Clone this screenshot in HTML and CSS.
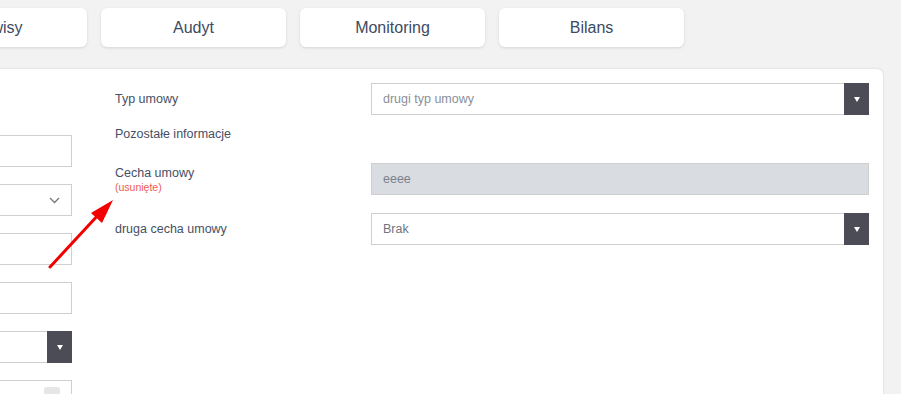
FILE: index.html
```html
<!DOCTYPE html>
<html lang="pl">
<head>
  <meta charset="UTF-8">
  <meta name="viewport" content="width=device-width, initial-scale=1.0">
  <title>Umowa - szczegóły</title>
  <link rel="stylesheet" href="styles.css">
</head>
<body>

  <div class="tabs">
    <div class="tab">Serwisy</div>
    <div class="tab">Audyt</div>
    <div class="tab">Monitoring</div>
    <div class="tab">Bilans</div>
  </div>

  <div class="panel">
    <!-- lewa kolumna formularza -->
    <div class="side">
      <div class="field"></div>
      <div class="field">
        <svg class="chevron" width="11" height="7" viewBox="0 0 11 7"><path d="M1 1 L5.5 5.5 L10 1" fill="none" stroke="#777" stroke-width="1.3"/></svg>
      </div>
      <div class="field"></div>
      <div class="field"></div>
      <div class="field">
        <span class="drop-btn"><i class="caret"></i></span>
      </div>
      <div class="field">
        <span class="spin"></span>
      </div>
    </div>

    <!-- dane umowy -->
    <div class="form">
      <div class="row">
        <div class="label">Typ umowy</div>
        <div class="input select">
          <span class="value">drugi typ umowy</span>
          <span class="drop-btn"><i class="caret"></i></span>
        </div>
      </div>

      <div class="row row-info">
        <div class="label">Pozostałe informacje</div>
      </div>

      <div class="row row-top">
        <div class="label">
          Cecha umowy
          <div class="removed">(usunięte)</div>
        </div>
        <div class="input disabled">
          <span class="value">eeee</span>
        </div>
      </div>

      <div class="row">
        <div class="label">druga cecha umowy</div>
        <div class="input select">
          <span class="value value-dark">Brak</span>
          <span class="drop-btn"><i class="caret"></i></span>
        </div>
      </div>
    </div>
  </div>

  <!-- strzałka wskazująca usunięte pole -->
  <svg class="pointer" width="901" height="394" viewBox="0 0 901 394">
    <line x1="50" y1="267" x2="100" y2="213" stroke="#f20000" stroke-width="3" stroke-linecap="round"/>
    <polygon points="113,200 91,213 102,223" fill="#f20000"/>
  </svg>

</body>
</html>
```

FILE: styles.css
```css
body {
  font-family: "Liberation Sans", Arial, sans-serif;
  background-color: #f2f2f2;
  color: #465064;
  margin: 0;
  padding: 0;
  width: 901px;
  height: 394px;
  overflow: hidden;
  position: relative;
}

.tabs {
  display: flex;
  gap: 14px;
  padding-top: 8px;
  margin-left: -98px;
}

.tab {
  flex: 0 0 185px;
  height: 39px;
  background: #fff;
  border-radius: 6px;
  box-shadow: 0 1px 3px rgba(0, 0, 0, 0.12);
  display: flex;
  align-items: center;
  justify-content: center;
  font-size: 16px;
  color: #3c4a62;
}

.panel {
  margin-top: 22px;
  margin-left: -100px;
  width: 983px;
  height: 340px;
  box-sizing: border-box;
  background: #fff;
  border-radius: 6px 6px 0 0;
  box-shadow: 0 0 2px rgba(0, 0, 0, 0.18);
  padding: 14px 14px 0 22px;
  display: flex;
}

.side {
  width: 150px;
  padding-top: 52px;
  display: flex;
  flex-direction: column;
  gap: 17px;
}

.field {
  height: 32px;
  box-sizing: border-box;
  border: 1px solid #cfcfcf;
  background: #fff;
  position: relative;
  flex-shrink: 0;
}

.chevron {
  position: absolute;
  right: 11px;
  top: 12px;
}

.spin {
  position: absolute;
  right: 11px;
  top: 6px;
  width: 16px;
  height: 12px;
  background: #e6e6e6;
  border-radius: 2px;
}

.form {
  margin-left: 43px;
  display: flex;
  flex-direction: column;
}

.row {
  display: flex;
  align-items: center;
  margin-bottom: 18px;
}

.row-info {
  margin-top: -7px;
  margin-bottom: 21px;
}

.row-top {
  align-items: flex-start;
}

.label {
  width: 256px;
  font-size: 12.5px;
  line-height: 16px;
  color: #465064;
}

.row-top .label {
  padding-top: 2px;
}

.removed {
  font-size: 10.5px;
  line-height: 13px;
  color: #ec5a55;
}

.input {
  width: 498px;
  height: 32px;
  box-sizing: border-box;
  border: 1px solid #cfcfcf;
  background: #fff;
  display: flex;
  align-items: center;
  position: relative;
}

.input.disabled {
  background: #d9dce0;
}

.value {
  padding-left: 11px;
  font-size: 12.5px;
  color: #8a8f99;
}

.disabled .value {
  color: #7a818e;
}

.value-dark {
  color: #6d7482;
}

.drop-btn {
  position: absolute;
  top: -1px;
  right: -1px;
  width: 25px;
  height: 32px;
  background: #4b4c55;
  display: flex;
  align-items: center;
  justify-content: center;
}

.caret {
  width: 0;
  height: 0;
  border-left: 3px solid transparent;
  border-right: 3px solid transparent;
  border-top: 5px solid #fff;
}

.pointer {
  position: absolute;
  left: 0;
  top: 0;
  pointer-events: none;
}
```
